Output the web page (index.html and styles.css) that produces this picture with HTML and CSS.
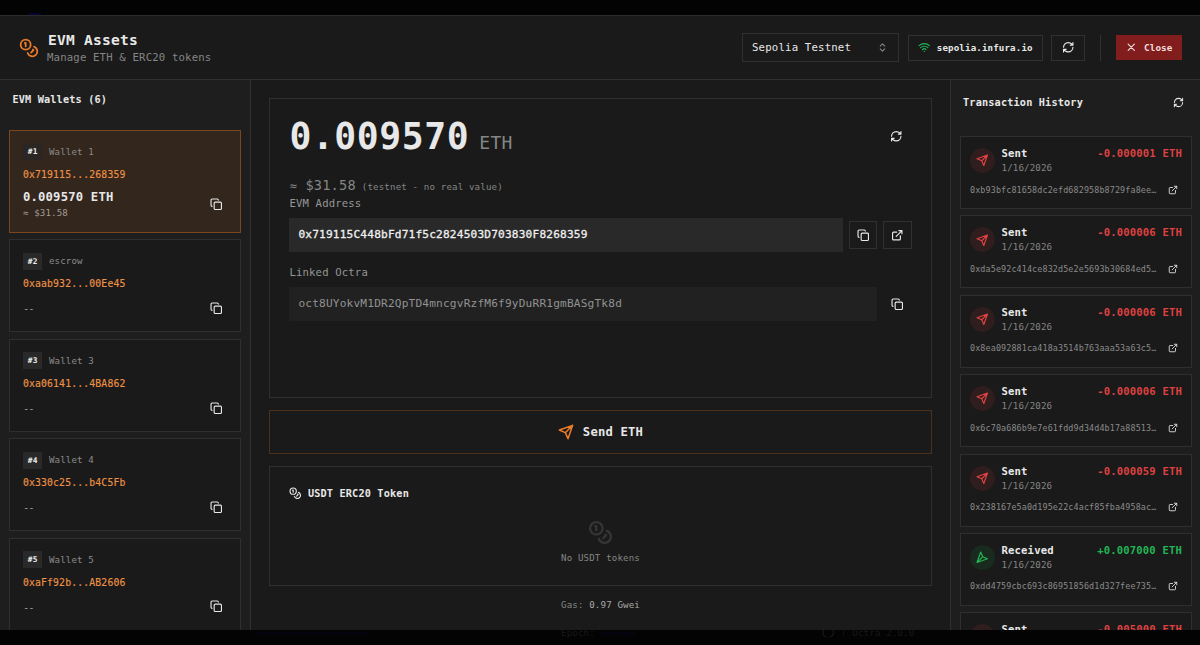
FILE: index.html
```html
<!DOCTYPE html>
<html lang="en">
<head>
  <meta charset="UTF-8">
  <meta name="viewport" content="width=device-width, initial-scale=1.0">
  <title>EVM Assets</title>
  <link rel="stylesheet" href="styles.css">
</head>
<body>

<svg class="sprite">
  <symbol id="coins" viewBox="0 0 24 24"><circle cx="8" cy="8" r="6"/><path d="M18.09 10.37A6 6 0 1 1 10.34 18M7 6h1v4M16.71 13.88l.7.71-2.82 2.82"/></symbol>
  <symbol id="refresh" viewBox="0 0 24 24"><path d="M3 12a9 9 0 0 1 9-9 9.75 9.75 0 0 1 6.74 2.74L21 8M21 3v5h-5M21 12a9 9 0 0 1-9 9 9.75 9.75 0 0 1-6.74-2.74L3 16M8 16H3v5"/></symbol>
  <symbol id="copy" viewBox="0 0 24 24"><rect x="8" y="8" width="14" height="14" rx="2"/><path d="M4 16c-1.1 0-2-.9-2-2V4c0-1.1.9-2 2-2h10c1.1 0 2 .9 2 2"/></symbol>
  <symbol id="external" viewBox="0 0 24 24"><path d="M15 3h6v6M10 14 21 3M18 13v6a2 2 0 0 1-2 2H5a2 2 0 0 1-2-2V8a2 2 0 0 1 2-2h6"/></symbol>
  <symbol id="send" viewBox="0 0 24 24"><path d="m22 2-7 20-4-9-9-4ZM22 2 11 13"/></symbol>
  <symbol id="wifi" viewBox="0 0 24 24"><path d="M12 20h.01M2 8.82a15 15 0 0 1 20 0M5 12.86a10 10 0 0 1 14 0M8.5 16.43a5 5 0 0 1 7 0"/></symbol>
  <symbol id="chevrons" viewBox="0 0 24 24"><path d="m7 15 5 5 5-5M7 9l5-5 5 5"/></symbol>
  <symbol id="close" viewBox="0 0 24 24"><path d="M18 6 6 18M6 6l12 12"/></symbol>
  <symbol id="github" viewBox="0 0 24 24"><path d="M9 21c-5-1-7-5-7-9s3-9 7-9M15 21c5-1 7-5 7-9s-3-9-7-9"/></symbol>
</svg>

<div class="backdrop-top"><span></span></div>

<div class="dialog">
  <header class="header">
    <svg class="icon brand"><use href="#coins"/></svg>
    <div class="heading">
      <h1>EVM Assets</h1>
      <p>Manage ETH &amp; ERC20 tokens</p>
    </div>
    <div class="select">Sepolia Testnet <svg class="icon"><use href="#chevrons"/></svg></div>
    <button class="rpc"><svg class="icon"><use href="#wifi"/></svg>sepolia.infura.io</button>
    <button class="reload"><svg class="icon"><use href="#refresh"/></svg></button>
    <div class="divider"></div>
    <button class="close"><svg class="icon"><use href="#close"/></svg>Close</button>
  </header>

  <div class="columns">
    <!-- Wallets -->
    <aside class="wallets">
      <h2>EVM Wallets (6)</h2>
      <div class="wallet-list">
        <div class="wallet selected">
          <div class="wallet-name"><b>#1</b>Wallet 1</div>
          <div class="wallet-address">0x719115...268359</div>
          <div class="wallet-row">
            <div>
              <div class="wallet-balance">0.009570 ETH</div>
              <div class="wallet-usd">≈ $31.58</div>
            </div>
            <svg class="icon"><use href="#copy"/></svg>
          </div>
        </div>
        <div class="wallet">
          <div class="wallet-name"><b>#2</b>escrow</div>
          <div class="wallet-address">0xaab932...00Ee45</div>
          <div class="wallet-row"><span class="empty">--</span><svg class="icon"><use href="#copy"/></svg></div>
        </div>
        <div class="wallet">
          <div class="wallet-name"><b>#3</b>Wallet 3</div>
          <div class="wallet-address">0xa06141...4BA862</div>
          <div class="wallet-row"><span class="empty">--</span><svg class="icon"><use href="#copy"/></svg></div>
        </div>
        <div class="wallet">
          <div class="wallet-name"><b>#4</b>Wallet 4</div>
          <div class="wallet-address">0x330c25...b4C5Fb</div>
          <div class="wallet-row"><span class="empty">--</span><svg class="icon"><use href="#copy"/></svg></div>
        </div>
        <div class="wallet">
          <div class="wallet-name"><b>#5</b>Wallet 5</div>
          <div class="wallet-address">0xaFf92b...AB2606</div>
          <div class="wallet-row"><span class="empty">--</span><svg class="icon"><use href="#copy"/></svg></div>
        </div>
      </div>
    </aside>

    <!-- Selected wallet -->
    <main class="main">
      <section class="balance-card">
        <div class="balance-row">
          <span class="amount">0.009570</span>
          <span class="unit">ETH</span>
          <svg class="icon"><use href="#refresh"/></svg>
        </div>
        <div class="fiat"><span class="approx">≈</span>$31.58<small>(testnet - no real value)</small></div>
        <div class="label">EVM Address</div>
        <div class="field-row">
          <div class="field strong">0x719115C448bFd71f5c2824503D703830F8268359</div>
          <button class="square"><svg class="icon"><use href="#copy"/></svg></button>
          <button class="square"><svg class="icon"><use href="#external"/></svg></button>
        </div>
        <div class="label linked">Linked Octra</div>
        <div class="field-row">
          <div class="field">oct8UYokvM1DR2QpTD4mncgvRzfM6f9yDuRR1gmBASgTk8d</div>
          <button class="square plain"><svg class="icon"><use href="#copy"/></svg></button>
        </div>
      </section>

      <button class="send"><svg class="icon"><use href="#send"/></svg>Send ETH</button>

      <section class="token-card">
        <h3><svg class="icon"><use href="#coins"/></svg>USDT ERC20 Token</h3>
        <div class="no-tokens">
          <svg class="icon"><use href="#coins"/></svg>
          <p>No USDT tokens</p>
        </div>
      </section>

      <div class="gas">Gas: <span>0.97 Gwei</span></div>
    </main>

    <!-- History -->
    <aside class="history">
      <h2>Transaction History <svg class="icon"><use href="#refresh"/></svg></h2>
      <div class="tx-list">
        <div class="tx">
          <div class="tx-top">
            <div class="tx-icon"><svg class="icon"><use href="#send"/></svg></div>
            <div class="tx-info"><strong>Sent</strong><span>1/16/2026</span></div>
            <div class="tx-amount">-0.000001 ETH</div>
          </div>
          <div class="tx-hash"><span>0xb93bfc81658dc2efd682958b8729fa8ee…</span><svg class="icon"><use href="#external"/></svg></div>
        </div>
        <div class="tx">
          <div class="tx-top">
            <div class="tx-icon"><svg class="icon"><use href="#send"/></svg></div>
            <div class="tx-info"><strong>Sent</strong><span>1/16/2026</span></div>
            <div class="tx-amount">-0.000006 ETH</div>
          </div>
          <div class="tx-hash"><span>0xda5e92c414ce832d5e2e5693b30684ed5…</span><svg class="icon"><use href="#external"/></svg></div>
        </div>
        <div class="tx">
          <div class="tx-top">
            <div class="tx-icon"><svg class="icon"><use href="#send"/></svg></div>
            <div class="tx-info"><strong>Sent</strong><span>1/16/2026</span></div>
            <div class="tx-amount">-0.000006 ETH</div>
          </div>
          <div class="tx-hash"><span>0x8ea092881ca418a3514b763aaa53a63c5…</span><svg class="icon"><use href="#external"/></svg></div>
        </div>
        <div class="tx">
          <div class="tx-top">
            <div class="tx-icon"><svg class="icon"><use href="#send"/></svg></div>
            <div class="tx-info"><strong>Sent</strong><span>1/16/2026</span></div>
            <div class="tx-amount">-0.000006 ETH</div>
          </div>
          <div class="tx-hash"><span>0x6c70a686b9e7e61fdd9d34d4b17a88513…</span><svg class="icon"><use href="#external"/></svg></div>
        </div>
        <div class="tx">
          <div class="tx-top">
            <div class="tx-icon"><svg class="icon"><use href="#send"/></svg></div>
            <div class="tx-info"><strong>Sent</strong><span>1/16/2026</span></div>
            <div class="tx-amount">-0.000059 ETH</div>
          </div>
          <div class="tx-hash"><span>0x238167e5a0d195e22c4acf85fba4958ac…</span><svg class="icon"><use href="#external"/></svg></div>
        </div>
        <div class="tx received">
          <div class="tx-top">
            <div class="tx-icon"><svg class="icon"><use href="#send"/></svg></div>
            <div class="tx-info"><strong>Received</strong><span>1/16/2026</span></div>
            <div class="tx-amount">+0.007000 ETH</div>
          </div>
          <div class="tx-hash"><span>0xdd4759cbc693c86951856d1d327fee735…</span><svg class="icon"><use href="#external"/></svg></div>
        </div>
        <div class="tx">
          <div class="tx-top">
            <div class="tx-icon"><svg class="icon"><use href="#send"/></svg></div>
            <div class="tx-info"><strong>Sent</strong></div>
            <div class="tx-amount">-0.005000 ETH</div>
          </div>
        </div>
      </div>
    </aside>
  </div>
</div>

<footer class="backdrop-bottom">
  <div class="status-line"></div>
  <span class="epoch">Epoch:</span>
  <div class="status-dot"></div>
  <svg class="icon"><use href="#github"/></svg>
  <span class="version">Octra 2.0.0</span>
</footer>

</body>
</html>
```

FILE: styles.css
```css
* {
  box-sizing: border-box;
  margin: 0;
  letter-spacing: 0.016em;
}

body {
  font-family: "DejaVu Sans Mono", monospace;
  font-size: 9px;
  background: #030303;
  color: #e8e8e8;
  height: 645px;
  display: flex;
  flex-direction: column;
  overflow: hidden;
  white-space: nowrap;
}

.sprite {
  display: none;
}

.icon {
  width: 12.5px;
  height: 12.5px;
  fill: none;
  stroke: currentColor;
  stroke-width: 2.2;
  stroke-linecap: round;
  stroke-linejoin: round;
  flex-shrink: 0;
}

button {
  font-family: inherit;
  color: #e8e8e8;
  background: none;
  border: 1px solid #303030;
  padding: 0;
  display: flex;
  align-items: center;
  justify-content: center;
}

.backdrop-top {
  height: 15px;
  padding: 13px 0 0 28px;
}

.backdrop-top span {
  display: block;
  width: 13px;
  height: 2px;
  background: #04042c;
}

.dialog {
  height: 615px;
  background: #1a1a1a;
  border-top: 1px solid #2a2a2a;
  display: flex;
  flex-direction: column;
  overflow: hidden;
}

/* header */
.header {
  height: 64px;
  flex-shrink: 0;
  border-bottom: 1px solid #303030;
  display: flex;
  align-items: center;
  padding: 0 18px 0 19px;
}

.brand {
  width: 20px;
  height: 20px;
  color: #ea7a28;
}

.heading {
  margin: 1px auto 0 9px;
}

h1 {
  font-size: 14.55px;
  line-height: 20px;
}

.heading p {
  font-size: 10.65px;
  line-height: 16px;
  margin-left: -1px;
  color: #858585;
}

.select {
  width: 157px;
  height: 29px;
  border: 1px solid #303030;
  padding: 0 10px 0 9px;
  font-size: 10.7px;
  display: flex;
  align-items: center;
  justify-content: space-between;
}

.select .icon {
  color: #888;
  width: 11px;
  height: 11px;
}

.rpc {
  width: 135px;
  height: 26px;
  margin-left: 9px;
  font-size: 9.15px;
  font-weight: bold;
  gap: 6px;
}

.rpc .icon {
  color: #22b455;
}

.reload {
  width: 34px;
  height: 26px;
  margin-left: 8px;
}

.divider {
  width: 1px;
  height: 26px;
  background: #303030;
  margin: 0 15px;
}

.close {
  width: 66px;
  height: 25px;
  border: 0;
  background: #821d1d;
  font-size: 9.25px;
  font-weight: bold;
  gap: 6px;
  color: #f0dede;
}

.columns {
  flex: 1;
  min-height: 0;
  display: flex;
}

h2,
h3 {
  font-size: 10.22px;
}

/* wallets */
.wallets {
  width: 251px;
  background: #1e1e1e;
  border-right: 1px solid #303030;
  padding: 0 9.4px;
}

.wallets h2 {
  line-height: 40px;
  height: 49.5px;
  padding-left: 3px;
}

.wallet-list {
  display: flex;
  flex-direction: column;
  gap: 6.4px;
}

.wallet {
  background: #1a1a1a;
  border: 1px solid #2f2f2f;
  padding: 12.5px;
  display: flex;
  flex-direction: column;
  gap: 6.5px;
}

.wallet.selected {
  background: #33261d;
  border-color: #79461f;
}

.wallet-name {
  display: flex;
  align-items: center;
  gap: 6.5px;
  height: 17px;
  font-size: 9.15px;
  color: #8a8a8a;
}

.wallet-name b {
  width: 19.5px;
  line-height: 17px;
  background: #292929;
  color: #eee;
  font-size: 7.8px;
  text-align: center;
}

.selected .wallet-name b {
  background: #2a2623;
}

.wallet-address {
  font-size: 9.78px;
  line-height: 15px;
  color: #ec9145;
  -webkit-text-stroke: 0.15px;
}

.wallet-row {
  min-height: 21px;
  display: flex;
  align-items: center;
  justify-content: space-between;
  padding-right: 4.5px;
}

.wallet-balance {
  font-size: 12.22px;
  line-height: 19px;
  font-weight: bold;
}

.wallet-usd {
  font-size: 9.15px;
  line-height: 12.5px;
  color: #a39c96;
}

.empty {
  font-size: 10.5px;
  letter-spacing: -0.1em;
  color: #999;
}

/* main column */
.main {
  flex: 1;
  padding: 18px 18.4px 0;
  display: flex;
  flex-direction: column;
}

.balance-card {
  height: 299.5px;
  border: 1px solid #2f2f2f;
  padding: 12.5px 19px 0;
}

.balance-row {
  height: 50px;
  display: flex;
  align-items: baseline;
}

.amount {
  font-size: 36.4px;
  line-height: 50px;
  font-weight: bold;
}

.unit {
  font-size: 18px;
  color: #858585;
  margin-left: 10px;
}

.balance-row .icon {
  align-self: center;
  margin: 0 9px 0 auto;
}

.fiat {
  margin-top: 13px;
  height: 20px;
  line-height: 20px;
  font-size: 13.6px;
  color: #858585;
}

.approx {
  font-size: 12px;
  display: inline-block;
  width: 16px;
}

.fiat small {
  font-size: 9.15px;
  margin-left: 6px;
}

.label {
  font-size: 10.6px;
  line-height: 16px;
  height: 23.5px;
  color: #969696;
}

.label.linked {
  margin-top: 12px;
  height: 23px;
}

.field-row {
  display: flex;
  align-items: center;
  gap: 6px;
}

.field {
  flex: 1;
  height: 34px;
  line-height: 33px;
  padding-left: 9px;
  font-size: 11.15px;
  background: #212121;
  color: #929292;
}

.field.strong {
  background: #292929;
  color: #efefef;
  -webkit-text-stroke: 0.3px;
}

.square {
  width: 28.5px;
  height: 28.5px;
}

.square.plain {
  border-color: transparent;
}

.send {
  margin-top: 12px;
  height: 44px;
  border-color: #4c3017;
  font-size: 12.2px;
  font-weight: bold;
  gap: 9px;
}

.send .icon {
  width: 16px;
  height: 16px;
  color: #ee7d28;
}

.token-card {
  margin-top: 12px;
  height: 120px;
  border: 1px solid #2f2f2f;
  padding: 19px;
}

h3 {
  display: flex;
  align-items: center;
  gap: 6px;
  height: 15px;
}

.no-tokens {
  margin-top: 19px;
  text-align: center;
  font-size: 9.15px;
  color: #858585;
}

.no-tokens .icon {
  width: 25px;
  height: 25px;
  color: #353535;
  display: block;
  margin: 0 auto 6px;
}

.no-tokens p {
  line-height: 14px;
}

.gas {
  margin-top: 13px;
  line-height: 13px;
  text-align: center;
  font-size: 9.15px;
  color: #858585;
}

.gas span {
  color: #a8a8a8;
}

/* history */
.history {
  width: 250px;
  background: #1e1e1e;
  border-left: 1px solid #303030;
  padding: 0 8px 0 9px;
}

.history h2 {
  display: flex;
  align-items: center;
  justify-content: space-between;
  height: 45px;
  margin-bottom: 11px;
  padding: 0 8px 0 3px;
}

.history h2 .icon {
  width: 11px;
  height: 11px;
}

.tx-list {
  display: flex;
  flex-direction: column;
  gap: 6.4px;
}

.tx {
  height: 73px;
  background: #1a1a1a;
  border: 1px solid #2f2f2f;
  padding: 9px 9px 0;
}

.tx-top {
  display: flex;
}

.tx-icon {
  width: 25px;
  height: 25px;
  margin-top: 2px;
  border-radius: 50%;
  background: #301d1d;
  color: #e24444;
  display: flex;
  align-items: center;
  justify-content: center;
}

.received .tx-icon {
  background: #182b1e;
  color: #22b455;
}

.received .tx-icon .icon {
  transform: rotate(180deg);
}

.tx-info {
  margin-left: 6.5px;
}

.tx-info strong,
.tx-info span {
  display: block;
}

.tx-info strong {
  font-size: 10.57px;
  line-height: 15px;
}

.tx-info span {
  font-size: 9.15px;
  line-height: 14px;
  color: #858585;
}

.tx-amount {
  margin-left: auto;
  font-size: 10.57px;
  line-height: 15px;
  font-weight: bold;
  color: #dd4141;
}

.received .tx-amount {
  color: #22b455;
}

.tx-hash {
  margin-top: 6.5px;
  height: 16px;
  display: flex;
  align-items: center;
  justify-content: space-between;
  padding-right: 4.5px;
  font-size: 8.4px;
  color: #8a8a8a;
}

.tx-hash .icon {
  width: 10px;
  height: 10px;
  color: #ddd;
}

/* dimmed page behind the dialog */
.backdrop-bottom {
  height: 15px;
  display: flex;
  align-items: flex-start;
  font-size: 9.15px;
  line-height: 6px;
  color: #181818;
  overflow: hidden;
}

.status-line {
  width: 112px;
  height: 3px;
  margin: 2px 0 0 255px;
  background: #04040f;
}

.epoch {
  margin-left: 194px;
}

.status-dot {
  width: 34px;
  height: 3px;
  margin: 2px 187px 0 6px;
  background: #04040f;
}

.backdrop-bottom .icon {
  margin-top: -4px;
}

.version {
  margin-left: 9px;
  padding-left: 8px;
  border-left: 1px solid #101010;
}
```
